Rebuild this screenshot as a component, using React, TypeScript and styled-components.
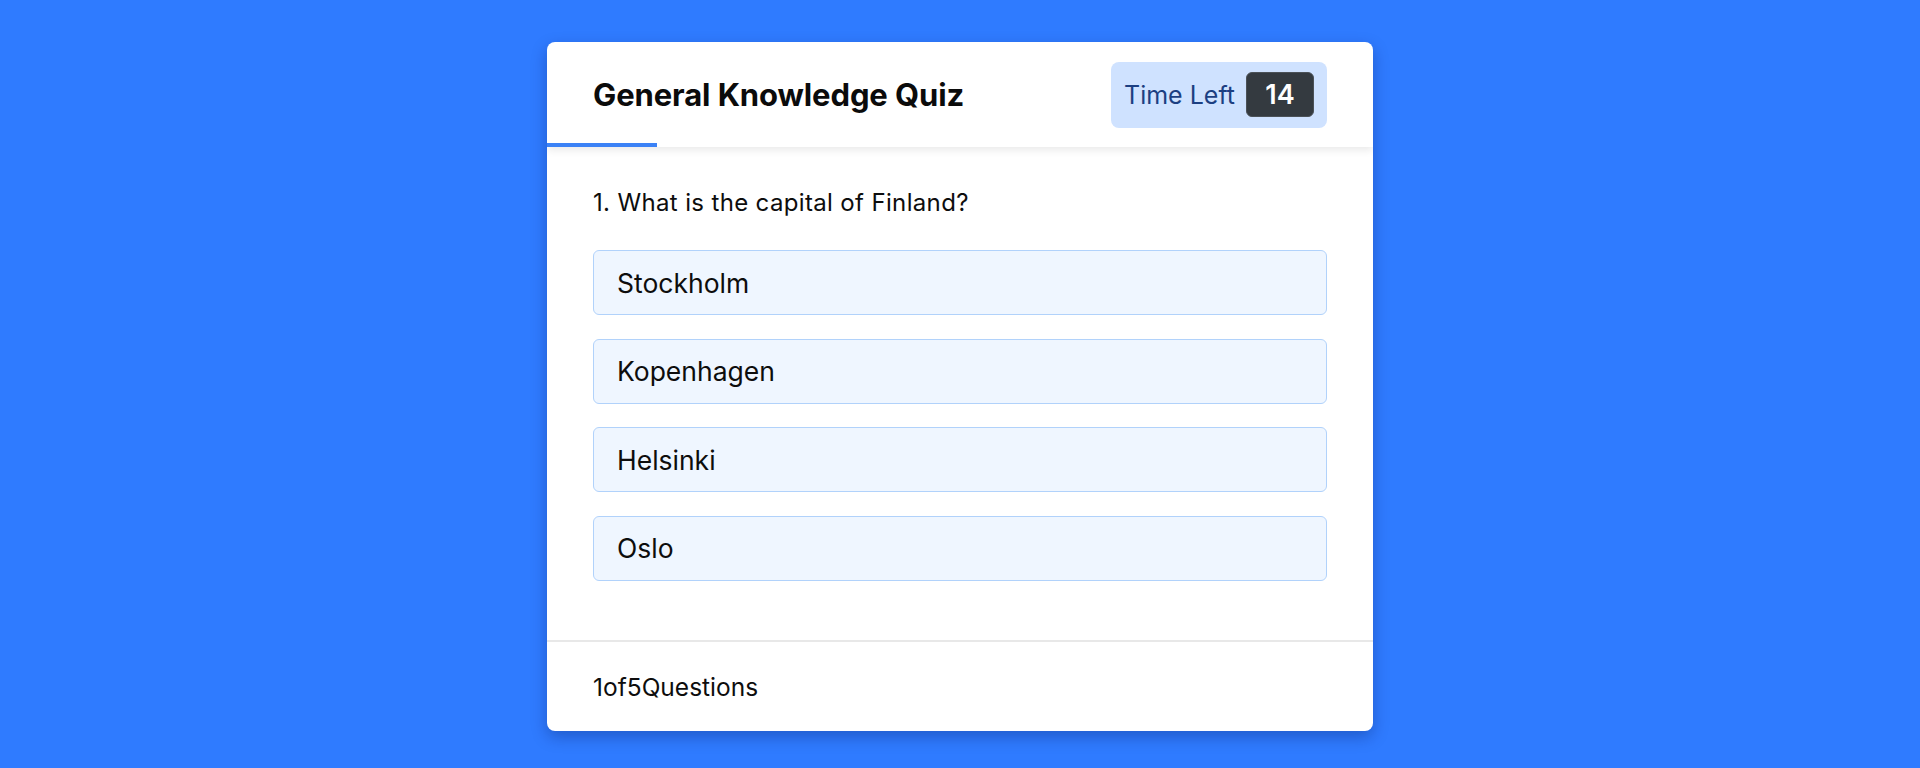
import React from "react";
import styled, { createGlobalStyle } from "styled-components";

const GlobalStyle = createGlobalStyle`
  html, body {
    margin: 0;
    padding: 0;
    background: #2f7bff;
  }

  body {
    font-family: Inter, "Noto Sans", Arial, sans-serif;
    color: #0d0d0d;
  }
`;

const Page = styled.div`
  min-height: 768px;
  display: flex;
  justify-content: center;
  align-items: flex-start;
  padding-top: 42px;
  box-sizing: border-box;
`;

const Card = styled.div`
  width: 826px;
  height: 689px;
  display: flex;
  flex-direction: column;

  background: #fff;
  border-radius: 8px;
  box-shadow: 0 6px 16px rgba(0, 20, 80, 0.3);
  overflow: hidden;
`;

const Header = styled.header`
  position: relative;
  z-index: 1;
  display: flex;
  flex-direction: column;

  box-shadow: 0 3px 8px rgba(0, 0, 0, 0.09);
`;

const HeaderRow = styled.div`
  height: 101px;
  display: flex;
  align-items: center;
  justify-content: space-between;
  padding: 4px 46px 0;
  box-sizing: border-box;
`;

const Title = styled.h1`
  margin: 0;
  font-size: 31px;
  font-weight: 700;
  letter-spacing: -0.1px;
  color: #0b0b0b;
`;

const Timer = styled.div`
  height: 66px;
  display: flex;
  align-items: center;
  gap: 11px;
  padding: 0 13px;
  box-sizing: border-box;

  background: #cfe2ff;
  border-radius: 8px;
`;

const TimerLabel = styled.span`
  font-size: 25px;
  color: #1c3f82;
`;

const TimerValue = styled.span`
  width: 68px;
  height: 45px;
  display: flex;
  align-items: center;
  justify-content: center;
  box-sizing: border-box;

  background: #343a40;
  border: 1px solid #4b5157;
  border-radius: 6px;
  color: #fff;
  font-size: 27px;
  font-weight: 600;
`;

const ProgressTrack = styled.div`
  height: 4px;
  display: flex;
`;

const ProgressBar = styled.div`
  background: #3b82f6;
`;

const Body = styled.main`
  flex: 1;
  display: flex;
  flex-direction: column;
  padding: 41px 46px 0;
`;

const Question = styled.p`
  margin: 0 0 32px;
  font-size: 24px;
  line-height: 30px;
  letter-spacing: 0.35px;
`;

const Options = styled.div`
  display: flex;
  flex-direction: column;
  gap: 23.5px;
`;

const Option = styled.button`
  height: 65px;
  display: flex;
  align-items: center;
  padding: 0 23px;
  box-sizing: border-box;

  background: #eff6ff;
  border: 1px solid #b1d2fb;
  border-radius: 6px;
  font-family: inherit;
  font-size: 26.5px;
  color: #0d0d0d;
  text-align: left;
  cursor: pointer;
`;

const Footer = styled.footer`
  height: 89px;
  display: flex;
  align-items: center;
  padding: 0 46px;

  border-top: 2px solid #e8e8e8;
  font-size: 24.5px;
`;

const answers = ["Stockholm", "Kopenhagen", "Helsinki", "Oslo"];

export default function App() {
  const timeLeft = 14;
  const progress = 110;

  return (
    <>
      <GlobalStyle />
      <Page>
        <Card>
          <Header>
            <HeaderRow>
              <Title>General Knowledge Quiz</Title>
              <Timer>
                <TimerLabel>Time Left</TimerLabel>
                <TimerValue>{timeLeft}</TimerValue>
              </Timer>
            </HeaderRow>
            <ProgressTrack>
              <ProgressBar style={{ width: progress }} />
            </ProgressTrack>
          </Header>
          <Body>
            <Question>1. What is the capital of Finland?</Question>
            <Options>
              {answers.map((answer) => (
                <Option key={answer}>{answer}</Option>
              ))}
            </Options>
          </Body>
          <Footer>
            <span>1</span>
            <span>of</span>
            <span>5</span>
            <span>Questions</span>
          </Footer>
        </Card>
      </Page>
    </>
  );
}
